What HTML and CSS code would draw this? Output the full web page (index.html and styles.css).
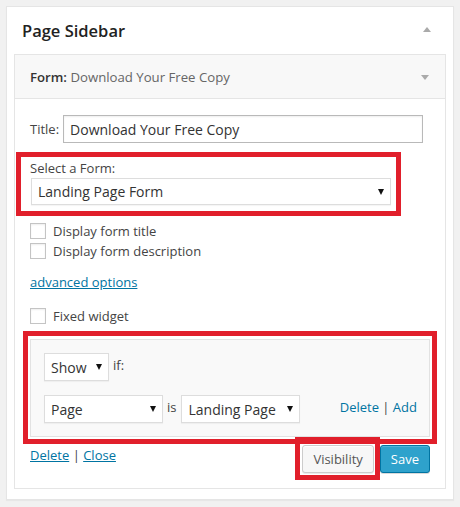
FILE: index.html
```html
<!DOCTYPE html>
<html lang="en">
<head>
    <meta charset="UTF-8">
    <title>Widgets</title>
    <link rel="stylesheet" href="styles.css">
</head>
<body>
    <div class="sidebar">
        <div class="sidebar-name">
            <h2>Page Sidebar</h2>
            <span class="arrow arrow-up"></span>
        </div>
        <div class="widget">
            <div class="widget-top">
                <h3><strong>Form:</strong> <span class="in-title">Download Your Free Copy</span></h3>
                <span class="arrow arrow-down"></span>
            </div>
            <div class="widget-inside">
                <div class="title-row">
                    <label for="widget-title">Title:</label>
                    <input type="text" id="widget-title" class="title-input" value="Download Your Free Copy">
                </div>

                <div class="mark mark-form">
                    <label for="form-id">Select a Form:</label>
                    <span class="select select-form">
                        <select id="form-id"><option>Landing Page Form</option></select>
                    </span>
                </div>

                <label class="check"><input type="checkbox"> Display form title</label>
                <label class="check"><input type="checkbox"> Display form description</label>

                <a href="#" class="advanced">advanced options</a>

                <label class="check check-fixed"><input type="checkbox"> Fixed widget</label>

                <div class="mark mark-rules">
                    <div class="rules">
                        <div class="rule-row">
                            <span class="select select-action">
                                <select><option>Show</option></select>
                            </span>
                            <span class="word">if:</span>
                        </div>
                        <div class="rule-row">
                            <span class="select select-rule">
                                <select><option>Page</option></select>
                            </span>
                            <span class="word">is</span>
                            <span class="select select-rule">
                                <select><option>Landing Page</option></select>
                            </span>
                            <span class="rule-links"><a href="#">Delete</a> | <a href="#">Add</a></span>
                        </div>
                    </div>
                </div>

                <div class="widget-control">
                    <div class="control-links"><a href="#">Delete</a> | <a href="#">Close</a></div>
                    <div class="control-actions">
                        <button class="button button-visibility">Visibility</button>
                        <button class="button button-save">Save</button>
                    </div>
                </div>
            </div>
        </div>
    </div>
</body>
</html>
```

FILE: styles.css
```css
body {
    font-family: 'Open Sans', 'Liberation Sans', sans-serif;
    font-size: 13px;
    line-height: 18px;
    background-color: #f1f1f1;
    color: #444;
    margin: 0;
    padding: 6px;
}
a {
    color: #0074a2;
}
.sidebar {
    width: 448px;
    box-sizing: border-box;
    background-color: #fff;
    border: 1px solid #e5e5e5;
    box-shadow: 0 1px 1px rgba(0, 0, 0, 0.04);
    padding: 0 7px 10px;
}
.sidebar-name {
    height: 47px;
    display: flex;
    align-items: center;
    justify-content: space-between;
    padding: 0 15px 0 8px;
}
.sidebar-name h2 {
    margin: 0;
    font-size: 16.5px;
    font-weight: 600;
    color: #222;
}
.arrow {
    width: 0;
    height: 0;
    border-left: 4px solid transparent;
    border-right: 4px solid transparent;
}
.arrow-up {
    border-bottom: 5px solid #aaa;
    margin-top: -2px;
}
.arrow-down {
    border-top: 5px solid #aaa;
    margin-top: 2px;
}
.widget {
    border: 1px solid #e5e5e5;
    background-color: #fff;
}
.widget-top {
    height: 43px;
    display: flex;
    align-items: center;
    justify-content: space-between;
    padding: 0 16px 0 15px;
    background-color: #f8f8f8;
    border-bottom: 1px solid #e5e5e5;
}
.widget-top h3 {
    margin: 0;
    font-size: 13.2px;
    font-weight: 400;
}
.widget-top strong {
    font-weight: 600;
    color: #333;
}
.in-title {
    color: #666;
}
.widget-inside {
    padding: 16px 15px 15px;
}

/* title field */
.title-row {
    display: flex;
    align-items: center;
}
.title-row label {
    margin-right: 4px;
}
.title-input {
    width: 360px;
    height: 28px;
    box-sizing: border-box;
    border: 1px solid #b9b9b9;
    padding: 0 6px;
    font-family: inherit;
    font-size: 14px;
    color: #333;
    box-shadow: inset 0 1px 2px rgba(0, 0, 0, 0.07);
}

/* red call-out frames */
.mark {
    border: 5px solid #e11f2b;
    box-sizing: border-box;
}
.mark-form {
    width: 385px;
    margin: 9px 0 0 -14px;
    padding: 1px 5px 6px 9px;
}
.mark-form label {
    display: block;
    line-height: 20px;
}
.mark-rules {
    margin: 5px -7px 0;
    padding: 3px 2px 2px;
}

/* selects */
.select {
    position: relative;
    display: inline-block;
}
.select select {
    appearance: none;
    -webkit-appearance: none;
    width: 100%;
    height: 28px;
    box-sizing: border-box;
    border: 1px solid #ddd;
    border-radius: 0;
    background-color: #fff;
    padding: 0 20px 0 6px;
    font-family: inherit;
    font-size: 14px;
    color: #333;
    box-shadow: 0 1px 1px rgba(0, 0, 0, 0.04);
}
.select::after {
    content: '';
    position: absolute;
    top: 50%;
    right: 7px;
    margin-top: -3px;
    border-left: 3.5px solid transparent;
    border-right: 3.5px solid transparent;
    border-top: 6px solid #111;
}
.select-form {
    display: block;
    width: 360px;
    margin-left: 1px;
}
.select-form select {
    height: 27px;
}
.select-action {
    width: 65px;
}
.select-rule {
    width: 119px;
}

/* checkboxes */
.check {
    display: flex;
    align-items: center;
    height: 20px;
}
.check:first-of-type {
    margin-top: 5px;
}
.check input {
    appearance: none;
    -webkit-appearance: none;
    width: 16px;
    height: 16px;
    margin: 0 7px 0 0;
    border: 1px solid #c4c4c4;
    background-color: #fff;
    box-shadow: inset 0 1px 2px rgba(0, 0, 0, 0.07);
}
.advanced {
    display: block;
    width: max-content;
    margin-top: 12px;
}
.check-fixed {
    margin-top: 15px;
}

/* visibility rules */
.rules {
    background-color: #f9f9f9;
    border: 1px solid #e2e2e2;
    padding: 13px 12px 13px 13px;
}
.rule-row {
    display: flex;
    align-items: center;
}
.rule-row + .rule-row {
    margin-top: 14px;
}
.word {
    margin: -4px 5px 0 4px;
}
.rule-links {
    margin-left: auto;
    margin-top: -4px;
}
.rule-links a {
    text-decoration: none;
}

/* bottom controls */
.widget-control {
    display: flex;
    justify-content: space-between;
    align-items: flex-start;
}
.control-links {
    margin-top: 2px;
}
.control-actions {
    display: flex;
    margin-top: 1px;
}
.button {
    height: 28px;
    padding: 0 10px;
    border-radius: 3px;
    font-family: inherit;
    font-size: 13px;
    line-height: 26px;
    cursor: pointer;
}
.button-visibility {
    position: relative;
    background-color: #f7f7f7;
    border: 1px solid #ccc;
    color: #555;
    box-shadow: inset 0 1px 0 #fff, 0 1px 0 rgba(0, 0, 0, 0.08);
    margin-right: 6px;
}
.button-visibility::after {
    content: '';
    position: absolute;
    top: -9px;
    left: -8px;
    right: -7px;
    bottom: -8px;
    border: 5px solid #e11f2b;
    pointer-events: none;
}
.button-save {
    background-color: #2ea2cc;
    border: 1px solid #0074a2;
    color: #fff;
    box-shadow: inset 0 1px 0 rgba(120, 200, 230, 0.5), 0 1px 0 rgba(0, 0, 0, 0.15);
}
```
